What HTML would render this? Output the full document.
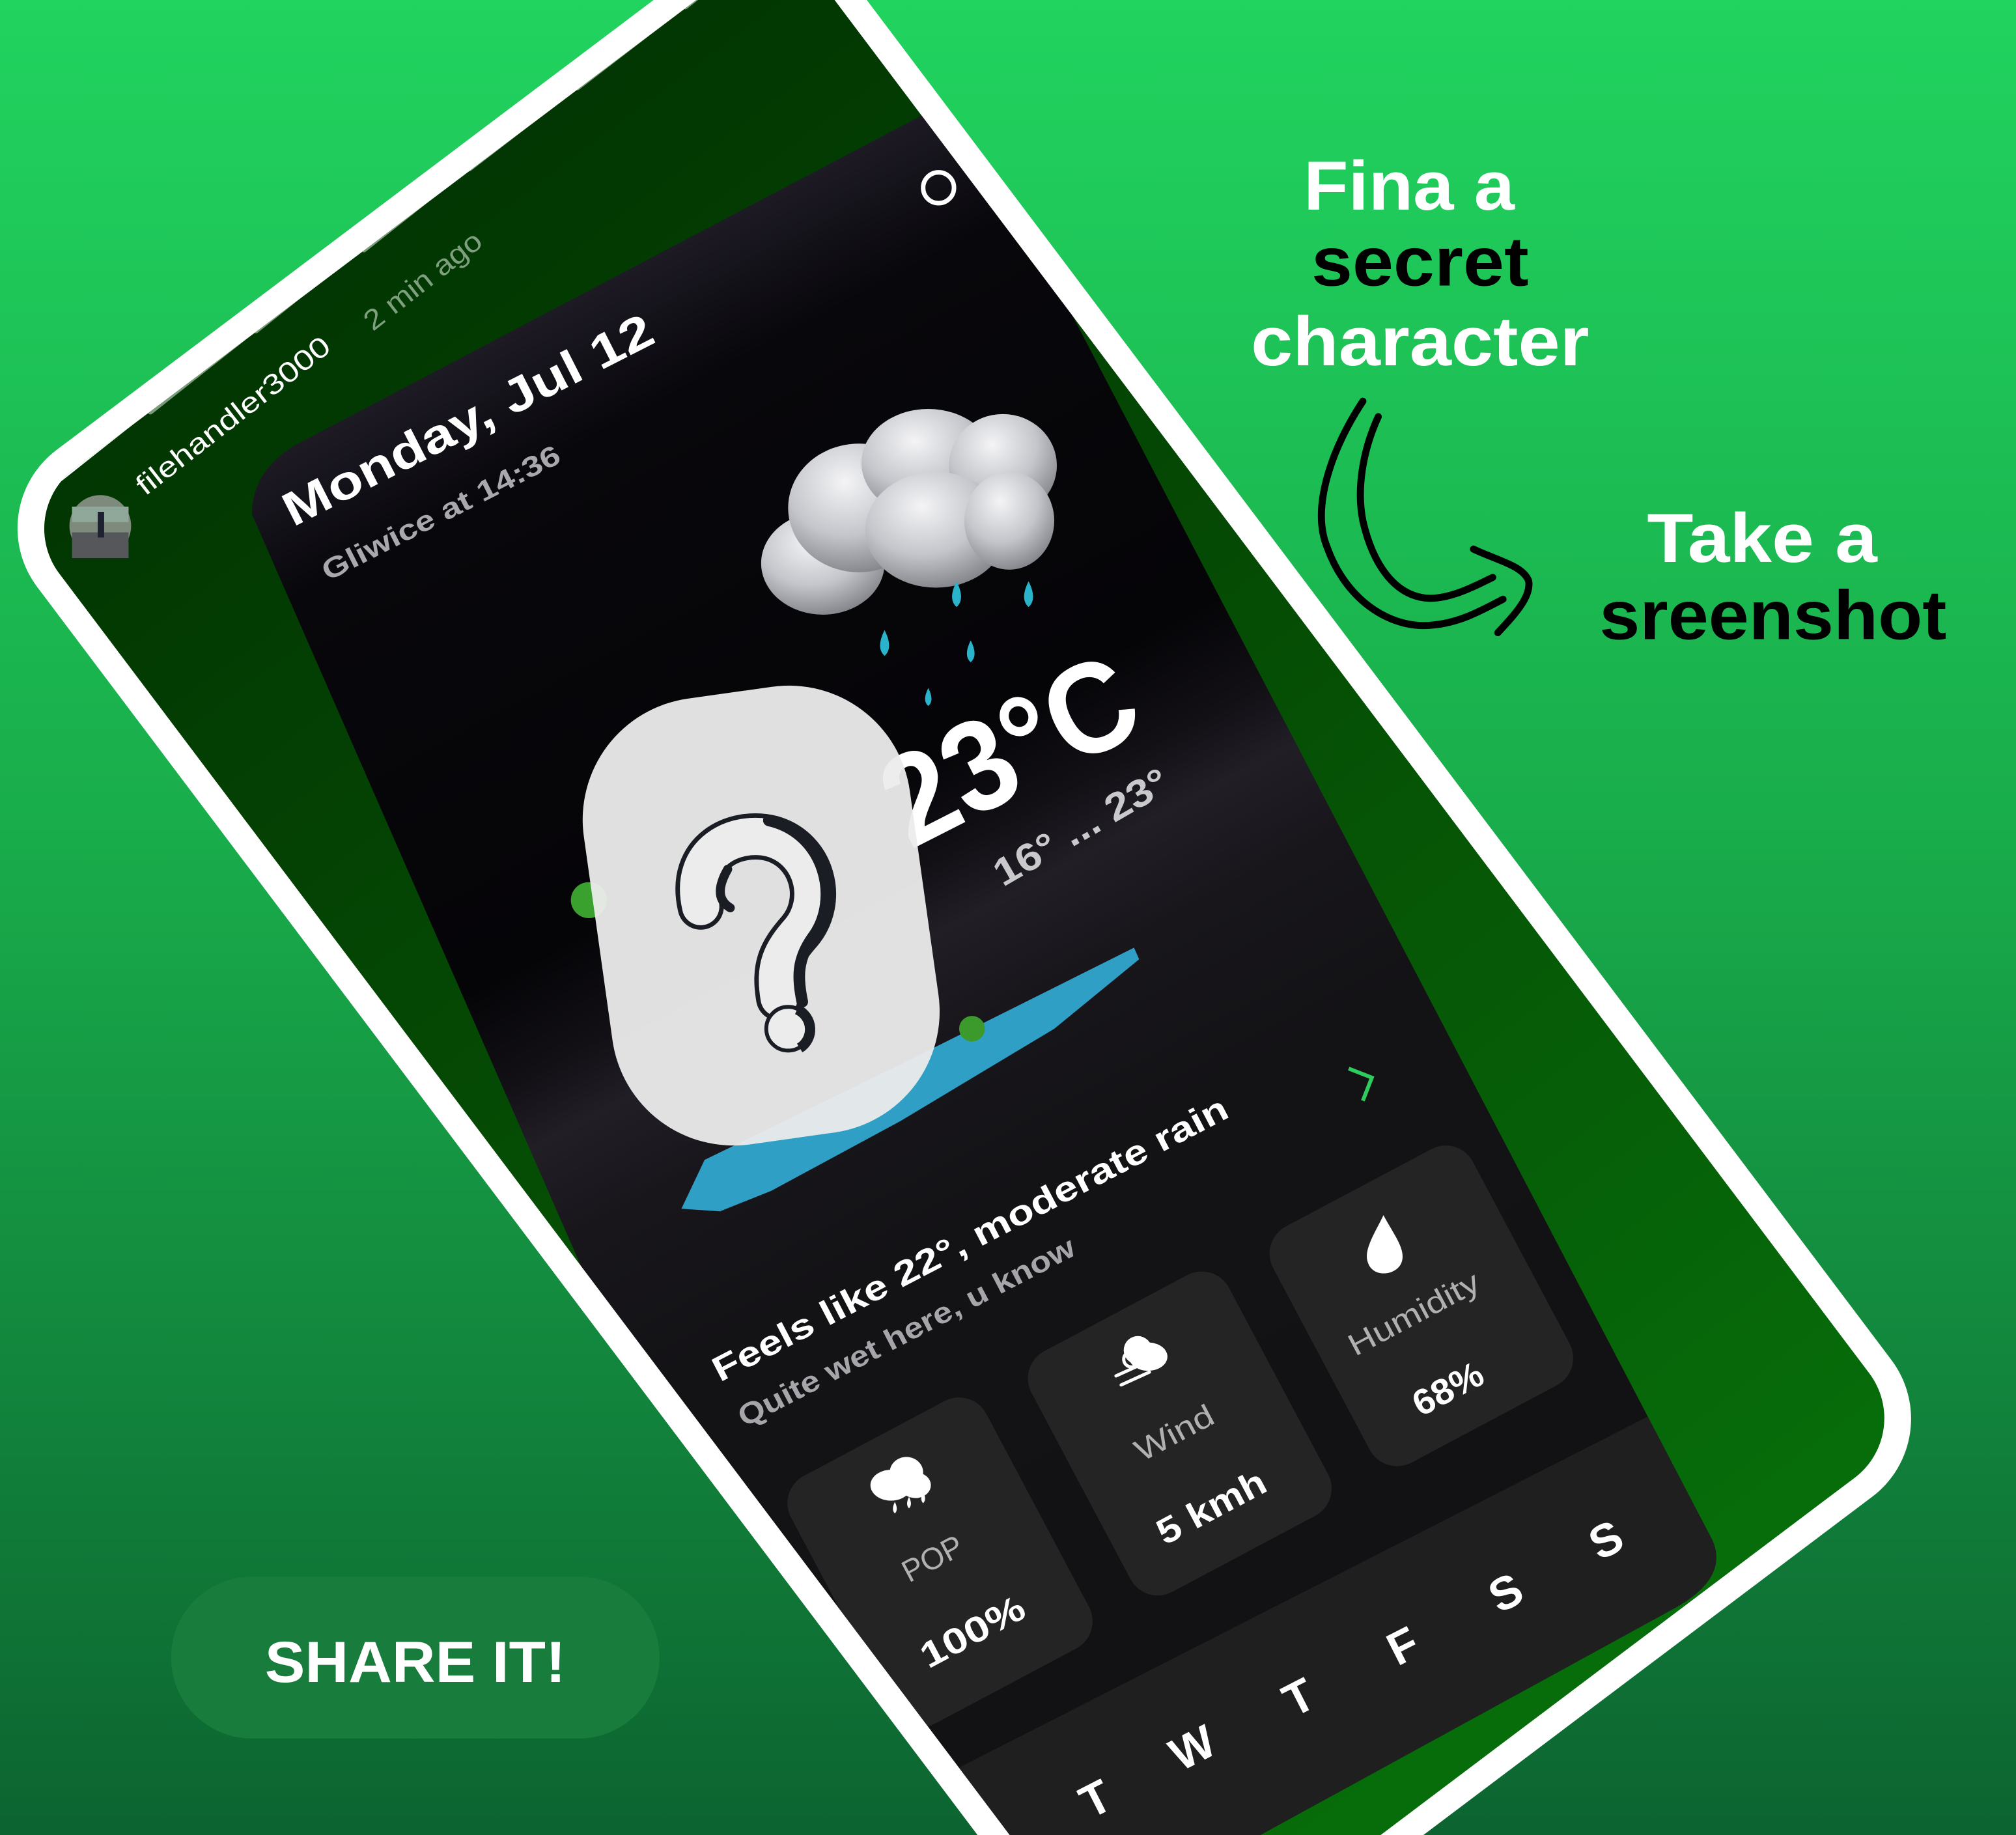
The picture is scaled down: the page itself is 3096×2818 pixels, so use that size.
<!DOCTYPE html>
<html><head><meta charset="utf-8">
<style>
html,body{margin:0;padding:0;background:#1a9e48;overflow:hidden;width:3096px;height:2818px;}
svg{display:block}
text{font-family:"Liberation Sans",sans-serif;}
</style></head>
<body>
<svg width="3096" height="2818" viewBox="0 0 1568 1427" preserveAspectRatio="none" xmlns="http://www.w3.org/2000/svg">
<defs>
  <linearGradient id="bg" x1="0" y1="0" x2="0" y2="1">
    <stop offset="0" stop-color="#21d35f"/>
    <stop offset="0.45" stop-color="#19ad4b"/>
    <stop offset="1" stop-color="#0c6430"/>
  </linearGradient>
  <linearGradient id="scr" x1="0" y1="0" x2="0" y2="1">
    <stop offset="0" stop-color="#023602"/>
    <stop offset="0.4" stop-color="#054a04"/>
    <stop offset="1" stop-color="#076d0a"/>
  </linearGradient>
  <linearGradient id="card" gradientUnits="userSpaceOnUse" x1="215" y1="355" x2="820" y2="1495">
    <stop offset="0" stop-color="#1d1a24"/>
    <stop offset="0.08" stop-color="#08070b"/>
    <stop offset="0.34" stop-color="#050407"/>
    <stop offset="0.40" stop-color="#121015"/>
    <stop offset="0.44" stop-color="#211e26"/>
    <stop offset="0.50" stop-color="#18161b"/>
    <stop offset="0.6" stop-color="#131215"/>
    <stop offset="1" stop-color="#121213"/>
  </linearGradient>
  <linearGradient id="band" gradientUnits="userSpaceOnUse" x1="600" y1="0" x2="1000" y2="0">
    <stop offset="0" stop-color="#3a3541" stop-opacity="0"/>
    <stop offset="1" stop-color="#3a3541" stop-opacity="0.8"/>
  </linearGradient>
  <radialGradient id="cl" cx="0.4" cy="0.3" r="0.75">
    <stop offset="0" stop-color="#f4f4f6"/>
    <stop offset="0.55" stop-color="#c4c6cb"/>
    <stop offset="1" stop-color="#7e8086"/>
  </radialGradient>
  <clipPath id="phoneClip">
    <rect transform="translate(750,757) rotate(-37)" x="-375" y="-730" width="750" height="1460" rx="58"/>
  </clipPath>
  <clipPath id="cardClip">
    <path d="M196,400 L660,1460 L920,1460 L1300,1252 Q1345,1228 1332,1198 L745,75 L230,346 Q196,366 196,400 Z"/>
  </clipPath>
</defs>

<rect width="1568" height="1427" fill="url(#bg)"/>

<g transform="translate(750,757) rotate(-37)">
  <rect x="-395" y="-750" width="790" height="1500" rx="76" fill="#ffffff"/>
  <rect x="-375" y="-730" width="750" height="1460" rx="58" fill="url(#scr)"/>
</g>

<g clip-path="url(#phoneClip)">
  <g stroke-linecap="round" stroke-width="4.5">
    <line x1="33" y1="383" x2="105" y2="326" stroke="#ffffff"/>
    <line x1="117" y1="320" x2="189" y2="263" stroke="#7a9c7a"/>
    <line x1="199" y1="257" x2="270" y2="200" stroke="#7a9c7a"/>
    <line x1="283" y1="194" x2="355" y2="137" stroke="#7a9c7a"/>
    <line x1="365" y1="131" x2="439" y2="74" stroke="#7a9c7a"/>
    <line x1="449" y1="68" x2="523" y2="11" stroke="#7a9c7a"/>
    <line x1="533" y1="5" x2="605" y2="-52" stroke="#7a9c7a"/>
  </g>
  <circle cx="78" cy="409" r="24" fill="#7d8a7c"/>
  <rect x="56" y="394" width="44" height="12" fill="#8fa89a"/>
  <rect x="56" y="414" width="44" height="20" fill="#55575a"/>
  <rect x="76" y="398" width="5" height="20" fill="#1e2230"/>
  <text transform="translate(113,386) rotate(-38)" font-size="22" fill="#fff" textLength="185" lengthAdjust="spacingAndGlyphs">filehandler3000</text>
  <text transform="translate(290,258) rotate(-38)" font-size="22" fill="#7fa07f" textLength="110" lengthAdjust="spacingAndGlyphs">2 min ago</text>

  <g clip-path="url(#cardClip)">
    <rect x="0" y="0" width="1568" height="1427" fill="url(#card)"/>
    <g transform="translate(900,585) rotate(-28)"><rect x="-500" y="-30" width="900" height="50" fill="url(#band)" opacity="0.8"/></g>
    <g transform="translate(700,1398) rotate(-27)">
      <rect x="0" y="0" width="700" height="300" rx="26" fill="#1f1f20"/>
    </g>
    <g transform="translate(604,1159) rotate(-28)"><rect width="172" height="218" rx="24" fill="#242424"/></g>
    <g transform="translate(791,1062) rotate(-28)"><rect width="174" height="212" rx="24" fill="#242424"/></g>
    <g transform="translate(979,965) rotate(-28)"><rect width="176" height="208" rx="24" fill="#242424"/></g>
    <circle cx="730" cy="146" r="12" fill="none" stroke="#fff" stroke-width="3.5"/>
  </g>
</g>

<text transform="translate(228,410) rotate(-27)" font-size="37" font-weight="700" fill="#fff" textLength="318" lengthAdjust="spacingAndGlyphs">Monday, Jul 12</text>
<text transform="translate(255,452) rotate(-27)" font-size="22" font-weight="700" fill="#a9a9ad" textLength="205" lengthAdjust="spacingAndGlyphs">Gliwice at 14:36</text>

<g>
  <ellipse cx="640" cy="438" rx="48" ry="40" fill="url(#cl)"/>
  <ellipse cx="668" cy="395" rx="55" ry="50" fill="url(#cl)"/>
  <ellipse cx="722" cy="360" rx="52" ry="42" fill="url(#cl)"/>
  <ellipse cx="780" cy="362" rx="42" ry="40" fill="url(#cl)"/>
  <ellipse cx="728" cy="412" rx="55" ry="45" fill="url(#cl)"/>
  <ellipse cx="785" cy="405" rx="35" ry="38" fill="url(#cl)"/>
</g>
<g fill="#2ab4cc">
  <path d="M744,452 Q751,466 744,472 Q737,466 744,452Z"/>
  <path d="M800,452 Q807,466 800,472 Q793,466 800,452Z"/>
  <path d="M688,490 Q695,504 688,510 Q681,504 688,490Z"/>
  <path d="M755,498 Q761,510 755,515 Q749,510 755,498Z"/>
  <path d="M722,535 Q727,545 722,549 Q717,545 722,535Z"/>
</g>

<text transform="translate(708,661) rotate(-27)" font-size="100" font-weight="700" fill="#fff" textLength="208" lengthAdjust="spacingAndGlyphs">23°C</text>
<text transform="translate(780,690) rotate(-30)" font-size="30" font-weight="700" fill="#c9c9cc" textLength="152" lengthAdjust="spacingAndGlyphs">16° ... 23°</text>

<path d="M530,940 L548,902 L700,828 L882,737 L886,746 L820,800 L700,872 L600,926 L560,942 Z" fill="#2f9fc6"/>
<circle cx="756" cy="800" r="10" fill="#3c9a2c"/>
<circle cx="458" cy="700" r="14" fill="#3aa02e"/>

<g transform="translate(592,712) rotate(-8)">
  <rect x="-128" y="-175" width="256" height="350" rx="95" fill="#ececec" opacity="0.95"/>
</g>
<g fill="none" stroke-linecap="round">
  <path d="M545,705 C535,662 572,645 600,652 C632,661 642,700 622,724 C607,741 602,752 606,776" stroke="#1a1d24" stroke-width="36"/>
  <path d="M545,705 C535,662 572,645 600,652 C632,661 642,700 622,724 C607,741 602,752 606,776" stroke="#ececec" stroke-width="29"/>
  <path d="M598,638 C642,648 654,700 632,729 C620,746 620,760 624,779" stroke="#1a1d24" stroke-width="9"/>
  <path d="M566,676 C558,690 558,700 568,706" stroke="#1a1d24" stroke-width="7"/>
</g>
<circle cx="613" cy="800" r="17" fill="#ececec" stroke="#1a1d24" stroke-width="3"/>
<path d="M620,785 A17,17 0 0 1 622,815" fill="none" stroke="#1a1d24" stroke-width="8"/>

<polyline points="1049,831 1067,838 1060,856" fill="none" stroke="#2ecc5c" stroke-width="3"/>

<text transform="translate(560,1075) rotate(-27.5)" font-size="27" font-weight="700" fill="#fff" textLength="448" lengthAdjust="spacingAndGlyphs">Feels like 22°, moderate rain</text>
<text transform="translate(579,1110) rotate(-27.5)" font-size="23" font-weight="700" fill="#a6a6aa" textLength="292" lengthAdjust="spacingAndGlyphs">Quite wet here, u know</text>

<g fill="#fff">
  <ellipse cx="693" cy="1155" rx="16" ry="12"/>
  <ellipse cx="705" cy="1145" rx="13" ry="12"/>
  <ellipse cx="712" cy="1155" rx="12" ry="10"/>
  <path d="M696,1168 q3,6 0,9 q-3,-3 0,-9z"/>
  <path d="M707,1164 q3,6 0,9 q-3,-3 0,-9z"/>
  <path d="M718,1160 q3,6 0,9 q-3,-3 0,-9z"/>
  <ellipse cx="893" cy="1055" rx="15" ry="11"/>
  <ellipse cx="885" cy="1050" rx="11" ry="11"/>
  <path d="M1076,945 C1084,960 1094,972 1090,982 C1086,992 1068,994 1064,982 C1060,972 1070,958 1076,945Z"/>
</g>
<g stroke="#fff" stroke-width="2.5" fill="none" stroke-linecap="round">
  <path d="M868,1070 L890,1060"/><path d="M872,1077 L894,1067"/><circle cx="880" cy="1057" r="6"/>
</g>

<text transform="translate(707,1231) rotate(-28)" font-size="24" fill="#b0b0b2" textLength="50" lengthAdjust="spacingAndGlyphs">POP</text>
<text transform="translate(722,1298) rotate(-28)" font-size="28" font-weight="700" fill="#fff" textLength="88" lengthAdjust="spacingAndGlyphs">100%</text>
<text transform="translate(888,1137) rotate(-28)" font-size="24" fill="#b0b0b2" textLength="66" lengthAdjust="spacingAndGlyphs">Wind</text>
<text transform="translate(906,1202) rotate(-28)" font-size="28" font-weight="700" fill="#fff" textLength="92" lengthAdjust="spacingAndGlyphs">5 kmh</text>
<text transform="translate(1054,1055) rotate(-28)" font-size="24" fill="#b0b0b2" textLength="112" lengthAdjust="spacingAndGlyphs">Humidity</text>
<text transform="translate(1105,1102) rotate(-28)" font-size="28" font-weight="700" fill="#fff" textLength="58" lengthAdjust="spacingAndGlyphs">68%</text>

<g font-size="36" font-weight="700" fill="#fff">
  <text transform="translate(848,1415) rotate(-27)">T</text>
  <text transform="translate(918,1378) rotate(-27)">W</text>
  <text transform="translate(1006,1336) rotate(-27)">T</text>
  <text transform="translate(1087,1296) rotate(-27)">F</text>
  <text transform="translate(1166,1255) rotate(-27)">S</text>
  <text transform="translate(1244,1214) rotate(-27)">S</text>
</g>

<g font-size="54" font-weight="700">
  <text x="1014" y="163" fill="#fff" textLength="164" lengthAdjust="spacingAndGlyphs">Fina a</text>
  <text x="1020" y="222" fill="#000" textLength="169" lengthAdjust="spacingAndGlyphs">secret</text>
  <text x="973" y="284" fill="#fff" textLength="263" lengthAdjust="spacingAndGlyphs">character</text>
  <text x="1281" y="437" fill="#fff" textLength="179" lengthAdjust="spacingAndGlyphs">Take a</text>
  <text x="1244" y="497" fill="#000" textLength="270" lengthAdjust="spacingAndGlyphs">sreenshot</text>
</g>

<g fill="none" stroke="#000" stroke-width="5.5" stroke-linecap="round">
  <path d="M1060,312 C1035,350 1020,395 1032,425 C1048,470 1085,490 1115,486 C1135,484 1150,476 1169,466"/>
  <path d="M1072,324 C1060,350 1055,380 1060,405 C1068,440 1085,462 1108,465 C1125,467 1145,457 1161,449"/>
  <path d="M1146,427 C1165,436 1185,440 1189,452 C1191,465 1176,480 1165,492"/>
</g>

<rect x="133" y="1226" width="380" height="126" rx="63" fill="#187c3c"/>
<text x="323" y="1308" text-anchor="middle" font-size="45" font-weight="700" fill="#fff" textLength="234" lengthAdjust="spacingAndGlyphs">SHARE IT!</text>
</svg>
</body></html>
